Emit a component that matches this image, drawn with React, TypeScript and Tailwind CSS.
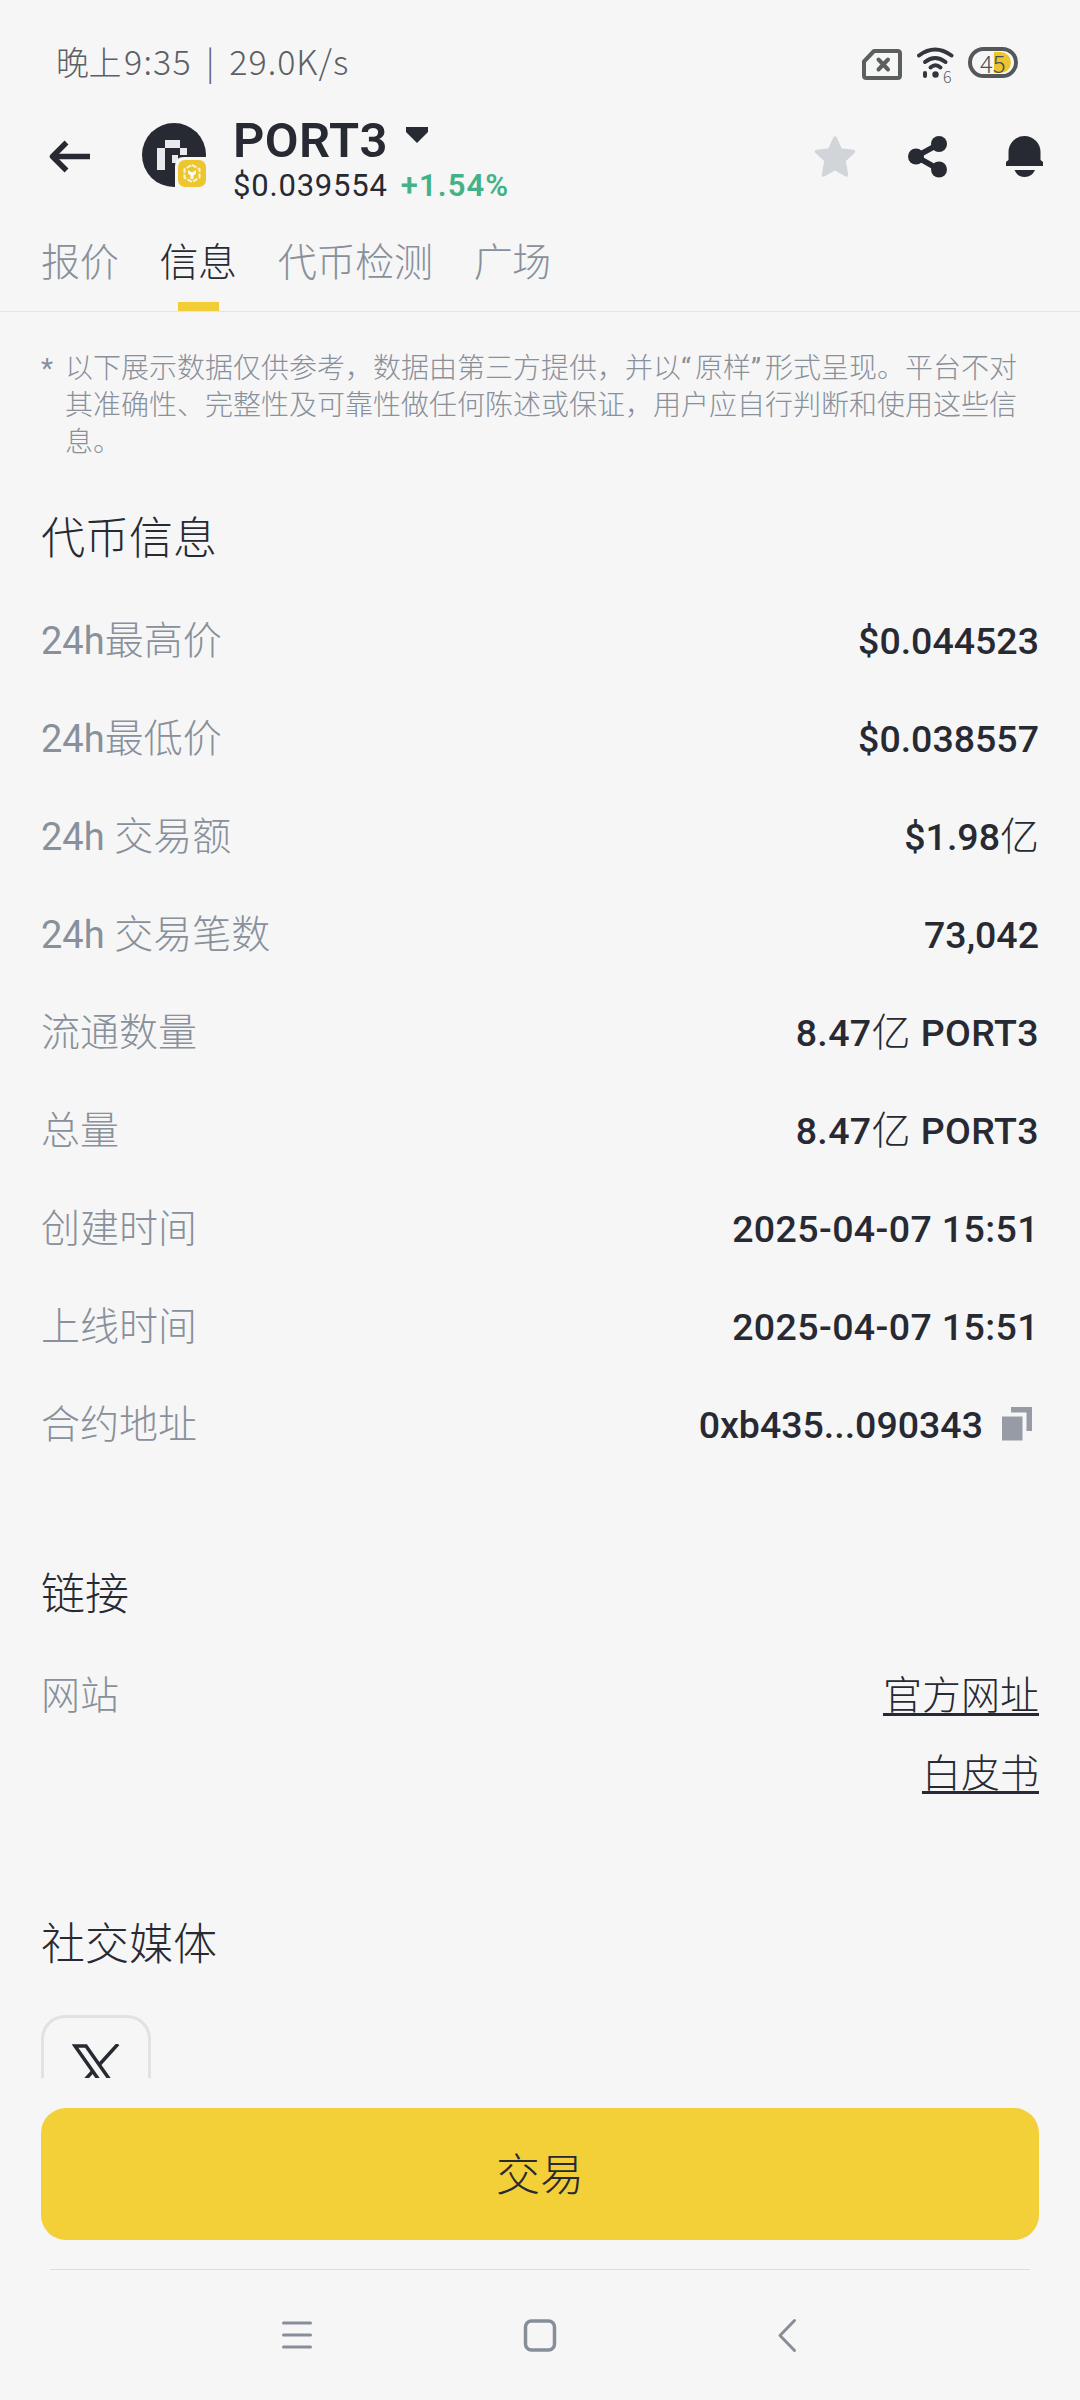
import type { ReactNode } from 'react';

const tabs = ['报价', '信息', '代币检测', '广场'];

const tokenInfo = [
  { label: '24h最高价', value: '$0.044523' },
  { label: '24h最低价', value: '$0.038557' },
  { label: '24h 交易额', value: '$1.98亿' },
  { label: '24h 交易笔数', value: '73,042' },
  { label: '流通数量', value: '8.47亿 PORT3', tracking: 'tracking-[0.4px]' },
  { label: '总量', value: '8.47亿 PORT3', tracking: 'tracking-[0.4px]' },
  { label: '创建时间', value: '2025-04-07 15:51', tracking: 'tracking-[0.4px]' },
  { label: '上线时间', value: '2025-04-07 15:51', tracking: 'tracking-[0.4px]' },
  { label: '合约地址', value: '0xb435...090343', copy: true },
];

function StatusBar() {
  return (
    <div className="flex h-[104px] shrink-0 items-start justify-between pl-[56px] pr-[62px] pt-[47px] text-[#5b5f66]">
      <div className="mt-[-6px] flex whitespace-pre font-['Noto_Sans_CJK_SC',sans-serif] text-[33px] font-[200] leading-[40px]">
        <span className="tracking-[-0.5px]">晚上</span>
        <span className="ml-[3px] text-[34px] tracking-[1.2px]">9:35</span>
        <span className="ml-[14px]">|</span>
        <span className="ml-[15px] text-[34px] tracking-[1px]">29.0K/s</span>
      </div>
      <div className="flex items-start">
        {/* no SIM */}
        <svg className="mt-[2px]" width="40" height="31" viewBox="0 0 40 31" fill="none" stroke="#5c5f60" strokeWidth="4">
          <path d="M12 2H35.5Q38 2 38 4.5V26.500Q38 29 35.500 29H4.500Q2 29 2 26.500V12.500Z" strokeLinejoin="round" />
          <path d="M16.500 10.500L26 20.500M26 10.500L16.500 20.500" strokeLinecap="round" />
        </svg>
        <div className="relative ml-[15px] h-[36px] w-[38px]">
          <svg width="38" height="36" viewBox="0 0 38 36" fill="none" stroke="#33363c" strokeWidth="4" strokeLinecap="round">
            <path d="M2 8.500Q18 -3.500 34.500 8.500" />
            <path d="M8 15Q18 7 28.500 15" />
            <path d="M13.500 20.500Q18.500 16 23.500 20.500" />
            <circle cx="18.500" cy="27.500" r="3.200" fill="#33363c" stroke="none" />
            <path d="M8 26V29" />
          </svg>
          <span className="absolute left-[26px] top-[20px] font-['Noto_Sans_CJK_SC',sans-serif] text-[16px] font-[300] leading-[18px]">6</span>
        </div>
        <div className="relative ml-[13px] h-[31px] w-[50px] rounded-full border-4 border-[#55585b]">
          <div className="absolute right-[3px] top-[1px] h-[21px] w-[17px] rounded-r-full bg-[#edc52f]" />
          <span className="absolute left-[8px] top-0 font-['Noto_Sans_CJK_SC',sans-serif] text-[24px] font-[300] leading-[23px] text-[#4a4e54]">
            45
          </span>
        </div>
      </div>
    </div>
  );
}

function TokenLogo() {
  return (
    <svg width="66" height="66" viewBox="0 0 66 66">
      <circle cx="32" cy="32" r="32" fill="#272a33" />
      <path d="M23 17H38V25H45V32H36V40H28V25H23V47H15V25H23Z" fill="#e8e9eb" />
      <path d="M23 25H38V32H30V47H23Z" fill="#272a33" />
      <path d="M33 43Q33 34 42 34H66V66H33Z" fill="#f6f6f6" />
      <rect x="36" y="37" width="28" height="27" rx="7" fill="#edc52f" />
      <path d="M50 42L57.500 46V54.500L50 59L42.500 54.500V46Z" fill="none" stroke="#fbf3cf" strokeWidth="2" strokeDasharray="5 1.500" />
      <path d="M46 47L50 49.500L54 47V50.500L51.500 52.500V56H48.500V52.500L46 50.500Z" fill="#fffdf2" />
    </svg>
  );
}

function Header() {
  return (
    <div className="flex h-[112px] shrink-0 items-start pl-[49px] pr-[37px] text-[#272a33]">
      <svg className="mt-[36px]" width="42" height="33" viewBox="0 0 42 33" fill="none" stroke="#272a33" strokeWidth="5.500">
        <path d="M41 16.500H4" />
        <path d="M17.500 2.500L3.500 16.500L17.500 30.500" strokeLinejoin="round" />
      </svg>
      <div className="ml-[51px] mt-[19px]">
        <TokenLogo />
      </div>
      <div className="ml-[25px] mt-[8px]">
        <div className="flex items-start">
          <span className="text-[49px] font-semibold leading-[58px] tracking-[0.4px]">PORT3</span>
          <svg className="ml-[18px] mt-[15px]" width="22" height="16" viewBox="0 0 22 16">
            <path d="M0 0H22V5L11 16L0 5Z" fill="#272a33" />
          </svg>
        </div>
        <div className="mt-[-2px] flex items-center text-[31px] leading-[36px]">
          <span className="tracking-[0.8px]">$0.039554</span>
          <span className="ml-[13px] font-semibold tracking-[1.1px] text-[#43b289]">+1.54%</span>
        </div>
      </div>
      <div className="ml-auto mt-[32px] flex items-start">
        <svg width="42" height="42" viewBox="0 0 42 42">
          <path
            d="M21 2L26.500 14L39.500 15.500L30 24.500L32.500 39L21 32.500L9.500 39L12 24.500L2.500 15.500L15.500 14Z"
            fill="#d1d5d9"
            stroke="#d1d5d9"
            strokeWidth="3.500"
            strokeLinejoin="round"
          />
        </svg>
        <svg className="ml-[52px]" width="40" height="42" viewBox="0 0 40 42" fill="#272a33">
          <path d="M31 8L8 20.500L31 33.500" fill="none" stroke="#272a33" strokeWidth="5.500" />
          <circle cx="31" cy="8" r="8" />
          <circle cx="8" cy="20.500" r="8" />
          <circle cx="31" cy="33.500" r="8" />
        </svg>
        <svg className="ml-[58px]" width="37" height="42" viewBox="0 0 37 42" fill="#272a33">
          <path d="M2.500 24V16A16 16 0 0 1 34.500 16V24L37 26V30H0V26Z" />
          <path d="M8.500 34H29Q26 41 18.700 41Q11.500 41 8.500 34Z" />
        </svg>
      </div>
    </div>
  );
}

function Tabs() {
  return (
    <div className="flex h-[96px] shrink-0 gap-[41px] border-b border-[#e3e5e7] pl-[41px] pt-[21px]">
      {tabs.map((tab) => (
        <div
          key={tab}
          className={`flex flex-col items-center text-[39px] leading-[52px] tracking-[-0.3px] ${
            tab === '信息' ? 'text-[#272a33]' : 'text-[#88909b]'
          }`}
        >
          <span>{tab}</span>
          {tab === '信息' && <div className="mt-[13px] h-[9px] w-[41px] bg-[#f3cd35]" />}
        </div>
      ))}
    </div>
  );
}

function SectionTitle({ children }: { children: ReactNode }) {
  return <h2 className="text-[44px] leading-[60px] text-[#272a33]">{children}</h2>;
}

export default function App() {
  return (
    <div className="flex h-[2400px] w-[1080px] flex-col overflow-hidden bg-[#f6f6f6] font-[Roboto,'Noto_Sans_CJK_SC',sans-serif] font-light">
      <StatusBar />
      <div className="font-normal">
        <Header />
      </div>
      <Tabs />

      <div className="h-[1766px] shrink-0 overflow-hidden px-[41px]">
        <div className="mt-[38px] flex text-[28px] leading-[37px] text-[#88909b]">
          <span className="w-[24px] shrink-0 font-normal">*</span>
          <p className="whitespace-nowrap">
            以下展示数据仅供参考，数据由第三方提供，并以
            <span className="font-normal tracking-[4px]">“</span>原样
            <span className="font-normal tracking-[4px]">”</span>形式呈现。平台不对
            <br />
            其准确性、完整性及可靠性做任何陈述或保证，用户应自行判断和使用这些信
            <br />
            息。
          </p>
        </div>

        <div className="mt-[48px]">
          <SectionTitle>代币信息</SectionTitle>
        </div>
        <div className="mt-[23px]">
          {tokenInfo.map((row) => (
            <div key={row.label} className="flex h-[98px] items-center justify-between text-[39px] leading-[50px]">
              <span className="text-[#88909b]">
                {row.label.startsWith('24h') && <span className="text-[38px] font-normal">24h</span>}
                {row.label.replace('24h', '')}
              </span>
              <div className="flex items-center text-[#272a33]">
                <span className={`whitespace-pre ${row.tracking ?? ''}`}>
                  {row.value.split('亿').map((part, i) => (
                    <span key={i}>
                      {i > 0 && '亿'}
                      <span className="text-[37.5px] font-medium">{part}</span>
                    </span>
                  ))}
                </span>
                {row.copy && (
                  <svg className="mb-[2px] ml-[19px] mr-[7px]" width="30" height="34" viewBox="0 0 30 34" fill="#969ba5">
                    <rect x="0" y="9.500" width="20.500" height="24" />
                    <path d="M9 0H30V24H24.500V5.500H9Z" />
                  </svg>
                )}
              </div>
            </div>
          ))}
        </div>

        <div className="mt-[91px]">
          <SectionTitle>链接</SectionTitle>
        </div>
        <div className="mt-[45px] flex justify-between text-[39px] leading-[52px]">
          <span className="text-[#88909b]">网站</span>
          <div className="flex flex-col items-end gap-[26px] text-[#272a33]">
            <a className="underline decoration-[3px] underline-offset-[4px]">官方网址</a>
            <a className="underline decoration-[3px] underline-offset-[4px]">白皮书</a>
          </div>
        </div>

        <div className="mt-[115px]">
          <SectionTitle>社交媒体</SectionTitle>
        </div>
        <div className="mt-[40px] flex h-[110px] w-[110px] justify-center rounded-[24px] border-[3px] border-[#e1e2e6] pt-[26px]">
          <svg width="48" height="48" viewBox="0 0 48 48" fill="none" stroke="#272a33" strokeWidth="3.500">
            <path d="M3 2H14L45 46H34Z" />
            <path d="M46 0L27 21M21 27L2 48" />
          </svg>
        </div>
      </div>

      <div className="mx-[41px] mt-[30px] flex h-[132px] shrink-0 items-center justify-center rounded-[25px] bg-[#f3cf38] pt-[3px] text-[44px] text-[#272a33]">
        交易
      </div>
      <div className="mx-[50px] mt-[29px] h-px shrink-0 bg-[#dcdce2]" />

      <svg className="mt-[48px] shrink-0" width="1080" height="36" viewBox="0 0 1080 36" fill="none" stroke="#878e98" strokeWidth="3" strokeLinecap="round">
        <path d="M283.500 5H310.500M283.500 17H310.500M283.500 29H310.500" />
        <rect x="525.500" y="3" width="29" height="29" rx="6" strokeWidth="3.500" />
        <path d="M794.500 2.500L780 17.500L794.500 32.500" strokeLinejoin="round" />
      </svg>
    </div>
  );
}
